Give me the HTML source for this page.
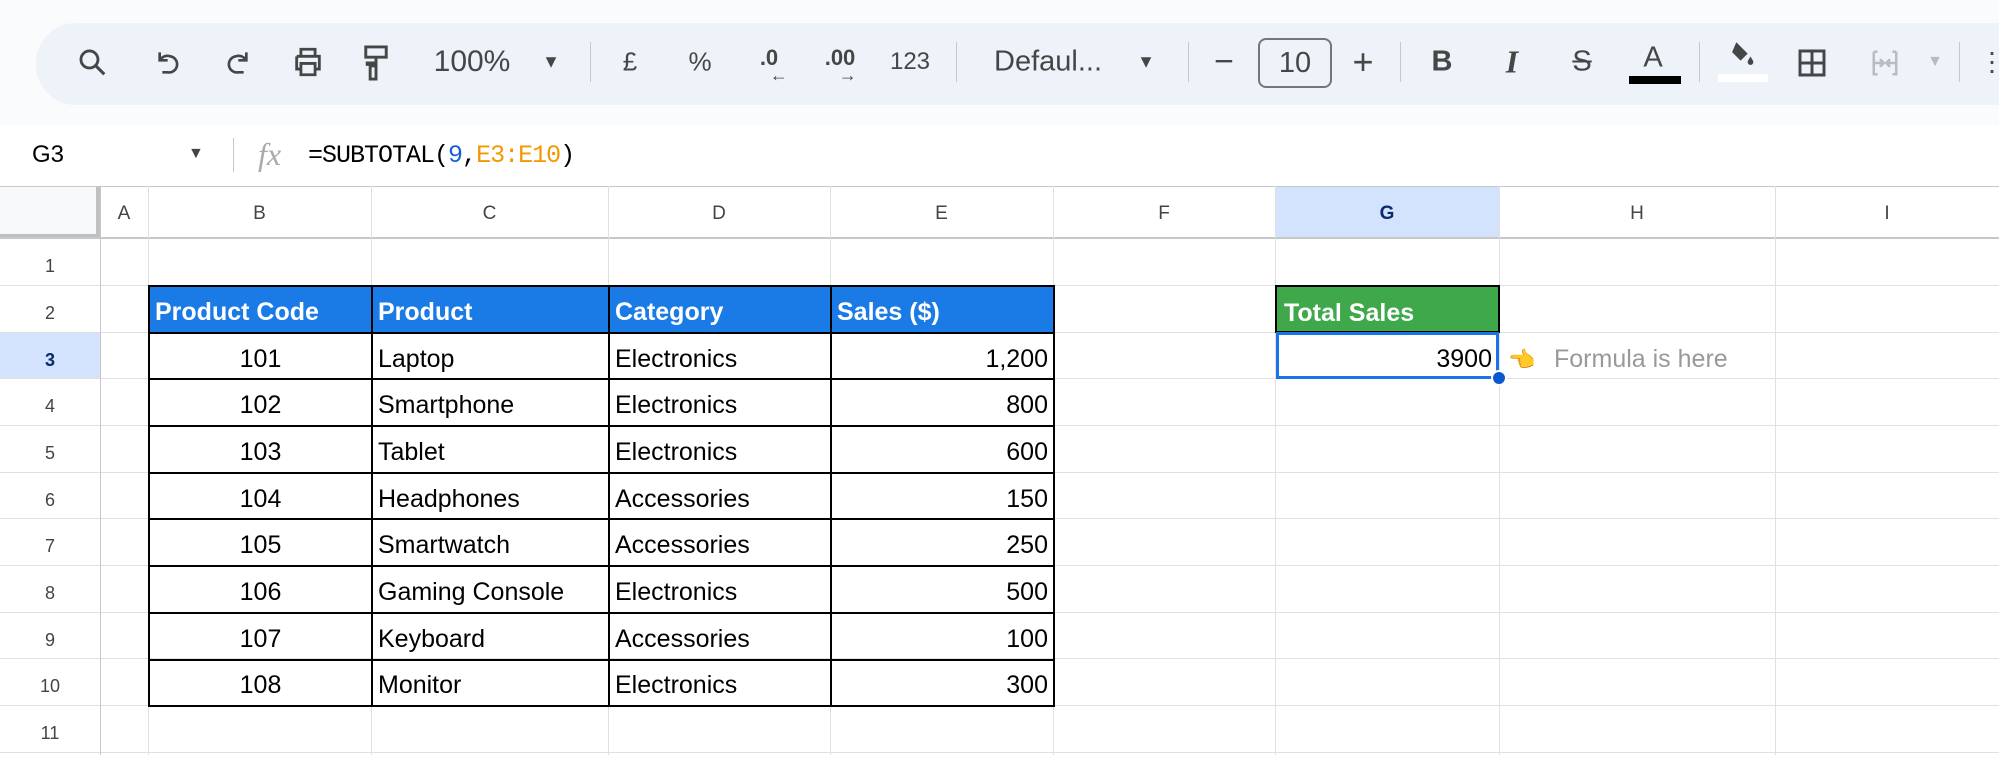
<!DOCTYPE html>
<html><head><meta charset="utf-8"><style>
*{margin:0;padding:0;box-sizing:border-box}
body{width:1999px;height:755px;overflow:hidden;background:#fff;font-family:"Liberation Sans",Arial,sans-serif;position:relative}
.a{position:absolute}
.tb{left:36px;top:23px;width:2000px;height:82px;background:#eef2f9;border-radius:40px}
.ic{position:absolute;top:62px;transform:translate(-50%,-50%);color:#444746;font-size:28px}
.dv{position:absolute;top:42px;width:1px;height:40px;background:#c7c7c7}
.vl{position:absolute;top:186px;width:1px;height:569px;background:#e0e0e0}
.hl{position:absolute;left:0;width:1999px;height:1px;background:#e0e0e0}
.ch{position:absolute;top:188px;height:52px;line-height:52px;text-align:center;font-size:19px;color:#444}
.rh{position:absolute;left:0;width:100px;height:47px;line-height:47px;padding-top:5px;text-align:center;font-size:18px;color:#444}
table{position:absolute;left:148px;top:285px;border-collapse:collapse;font-size:25px}
td{border:2px solid #000;height:46.7px;padding:6px 5px 0;white-space:nowrap;color:#000}
tr.h td{background:#1b7be6;color:#fff;font-weight:bold}
</style></head><body>
<div class="a" style="left:0;top:0;width:1999px;height:125px;background:#f9fbfd"></div>
<div class="a tb"></div>
<svg class="a" style="left:76px;top:46px" width="34" height="34" viewBox="0 0 24 24"><circle cx="9.5" cy="9.5" r="6" fill="none" stroke="#444746" stroke-width="2"/><path d="M14 14l6 6" stroke="#444746" stroke-width="2.2"/></svg>
<svg class="a" style="left:153px;top:47px" width="32" height="32" viewBox="0 0 24 24"><path d="M5 4v6h6M5 10c2-3 5-4 8-3a6 6 0 0 1-2 12H7" fill="none" stroke="#444746" stroke-width="2"/></svg>
<svg class="a" style="left:221px;top:47px" width="32" height="32" viewBox="0 0 24 24"><path d="M19 4v6h-6M19 10c-2-3-5-4-8-3a6 6 0 0 0 2 12h4" fill="none" stroke="#444746" stroke-width="2"/></svg>
<svg class="a" style="left:291px;top:45px" width="34" height="34" viewBox="0 0 24 24"><path d="M7 8V3h10v5M4 8h16v9h-3M7 17H4V8M7 13h10v8H7z" fill="none" stroke="#444746" stroke-width="2"/></svg>
<svg class="a" style="left:361px;top:44px" width="30" height="38" viewBox="0 0 20 26"><path d="M3 2h14v7H3zM10 9v4H4v2M6 15h4v9H6z" fill="none" stroke="#444746" stroke-width="2"/></svg>
<div class="ic" style="left:472px;font-size:30px">100%</div>
<div class="ic" style="left:551px;font-size:18px">▼</div>
<div class="dv" style="left:590px"></div>
<div class="ic" style="left:630px;font-size:26px">£</div>
<div class="ic" style="left:700px;font-size:26px">%</div>
<div class="ic" style="left:769px;font-size:22px;font-weight:bold;top:58px">.0<span style="position:absolute;left:10px;top:20px;font-size:18px">←</span></div>
<div class="ic" style="left:840px;font-size:22px;font-weight:bold;top:58px">.00<span style="position:absolute;left:14px;top:20px;font-size:18px">→</span></div>
<div class="ic" style="left:910px;font-size:24px">123</div>
<div class="dv" style="left:956px"></div>
<div class="ic" style="left:1048px;font-size:29px">Defaul...</div>
<div class="ic" style="left:1146px;font-size:18px">▼</div>
<div class="dv" style="left:1188px"></div>
<div class="ic" style="left:1224px;font-size:34px">−</div>
<div class="a" style="left:1258px;top:38px;width:74px;height:50px;border:2px solid #747775;border-radius:8px;text-align:center;line-height:46px;font-size:29px;color:#444746">10</div>
<div class="ic" style="left:1363px;font-size:36px">+</div>
<div class="dv" style="left:1400px"></div>
<div class="ic" style="left:1442px;font-weight:bold;font-size:29px">B</div>
<div class="ic" style="left:1512px;font-style:italic;font-weight:bold;font-size:32px;font-family:'Liberation Serif',serif">I</div>
<div class="ic" style="left:1582px;font-size:29px;text-decoration:line-through">S</div>
<div class="ic" style="left:1653px;font-size:29px;top:58px">A</div>
<div class="a" style="left:1629px;top:76px;width:52px;height:8px;background:#000"></div>
<div class="dv" style="left:1699px"></div>
<svg class="a" style="left:1725px;top:38px" width="34" height="34" viewBox="0 0 24 24"><path d="M8 3l8 8-5 5-6-6zM18 13c1 2 2 3 2 4a2 2 0 0 1-4 0c0-1 1-2 2-4z" fill="#444746"/></svg>
<div class="a" style="left:1718px;top:74px;width:50px;height:8px;background:#fff"></div>
<svg class="a" style="left:1796px;top:47px" width="32" height="32" viewBox="0 0 24 24"><path d="M3 3h18v18H3zM12 3v18M3 12h18" fill="none" stroke="#444746" stroke-width="2.2"/></svg>
<svg class="a" style="left:1870px;top:48px" width="30" height="30" viewBox="0 0 24 24"><path d="M3 3h3M3 3v18h3M21 3h-3M21 3v18h-3M4 12h6M20 12h-6M8 9l3 3-3 3M16 9l-3 3 3 3" fill="none" stroke="#b8bcc2" stroke-width="2"/></svg>
<div class="ic" style="left:1935px;font-size:16px;color:#b8bcc2">▼</div>
<div class="dv" style="left:1959px"></div>
<div class="ic" style="left:1992px;font-size:26px">⋮</div>
<div class="a" style="left:32px;top:141px;font-size:24px;color:#000">G3</div>
<div class="a" style="left:188px;top:145px;font-size:16px;color:#444">▼</div>
<div class="a" style="left:233px;top:138px;width:1px;height:34px;background:#c7c7c7"></div>
<div class="a" style="left:258px;top:136px;font-size:32px;font-style:italic;color:#aaa;font-family:'Liberation Serif',serif">fx</div>
<div class="a" style="left:308px;top:141px;font-size:25px;font-family:'Liberation Mono',monospace;color:#000;letter-spacing:-1px">=SUBTOTAL(<span style="color:#1a5fd6">9</span>,<span style="color:#f29900">E3:E10</span>)</div>
<div class="a" style="left:0;top:186px;width:100px;height:52px;background:#f8f9fa;border-right:4px solid #c0c0c0;border-bottom:4px solid #c0c0c0"></div>
<div class="a" style="left:1275px;top:186px;width:224px;height:52px;background:#d3e3fd"></div>
<div class="a" style="left:0;top:332px;width:100px;height:46px;background:#d3e3fd"></div>
<div class="hl" style="top:186px;background:#c7c7c7"></div>
<div class="hl" style="top:237px;height:2px;background:#c7c7c7"></div>
<div class="hl" style="top:285px"></div><div class="hl" style="top:332px"></div><div class="hl" style="top:378px"></div><div class="hl" style="top:425px"></div><div class="hl" style="top:472px"></div><div class="hl" style="top:518px"></div><div class="hl" style="top:565px"></div><div class="hl" style="top:612px"></div><div class="hl" style="top:658px"></div><div class="hl" style="top:705px"></div><div class="hl" style="top:752px"></div>
<div class="vl" style="left:100px;background:#c7c7c7"></div><div class="vl" style="left:148px"></div><div class="vl" style="left:371px"></div><div class="vl" style="left:608px"></div><div class="vl" style="left:830px"></div><div class="vl" style="left:1053px"></div><div class="vl" style="left:1275px"></div><div class="vl" style="left:1499px"></div><div class="vl" style="left:1775px"></div>
<div class="ch" style="left:100px;width:48px">A</div><div class="ch" style="left:148px;width:223px">B</div><div class="ch" style="left:371px;width:237px">C</div><div class="ch" style="left:608px;width:222px">D</div><div class="ch" style="left:830px;width:223px">E</div><div class="ch" style="left:1053px;width:222px">F</div><div class="ch" style="left:1275px;width:224px;color:#0b2a6b;font-weight:bold">G</div><div class="ch" style="left:1499px;width:276px">H</div><div class="ch" style="left:1775px;width:224px">I</div>
<div class="rh" style="top:238px">1</div><div class="rh" style="top:285px">2</div><div class="rh" style="top:332px;color:#0b2a6b;font-weight:bold">3</div><div class="rh" style="top:378px">4</div><div class="rh" style="top:425px">5</div><div class="rh" style="top:472px">6</div><div class="rh" style="top:518px">7</div><div class="rh" style="top:565px">8</div><div class="rh" style="top:612px">9</div><div class="rh" style="top:658px">10</div><div class="rh" style="top:705px">11</div>
<table>
<colgroup><col style="width:223px"><col style="width:237px"><col style="width:222px"><col style="width:223px"></colgroup>
<tr class="h"><td>Product Code</td><td>Product</td><td>Category</td><td>Sales ($)</td></tr>
<tr><td align="center">101</td><td>Laptop</td><td>Electronics</td><td align="right">1,200</td></tr>
<tr><td align="center">102</td><td>Smartphone</td><td>Electronics</td><td align="right">800</td></tr>
<tr><td align="center">103</td><td>Tablet</td><td>Electronics</td><td align="right">600</td></tr>
<tr><td align="center">104</td><td>Headphones</td><td>Accessories</td><td align="right">150</td></tr>
<tr><td align="center">105</td><td>Smartwatch</td><td>Accessories</td><td align="right">250</td></tr>
<tr><td align="center">106</td><td>Gaming Console</td><td>Electronics</td><td align="right">500</td></tr>
<tr><td align="center">107</td><td>Keyboard</td><td>Accessories</td><td align="right">100</td></tr>
<tr><td align="center">108</td><td>Monitor</td><td>Electronics</td><td align="right">300</td></tr>
</table>
<div class="a" style="left:1275px;top:285px;width:225px;height:48px;background:#3ea84b;border:2px solid #000;color:#fff;font-weight:bold;font-size:25px;line-height:44px;padding:4px 0 0 7px">Total Sales</div>
<div class="a" style="left:1276px;top:332px;width:223px;height:47px;border:3px solid #1a73e8;font-size:25px;line-height:41px;text-align:right;padding:4px 4px 0 0">3900</div>
<div class="a" style="left:1491px;top:370px;width:16px;height:16px;border-radius:50%;background:#0b57d0;border:2px solid #fff"></div>
<div class="a" style="left:1508px;top:347px;font-size:22px;color:#f0b030">👈</div>
<div class="a" style="left:1554px;top:345px;font-size:25px;color:#999">Formula is here</div>
</body></html>
